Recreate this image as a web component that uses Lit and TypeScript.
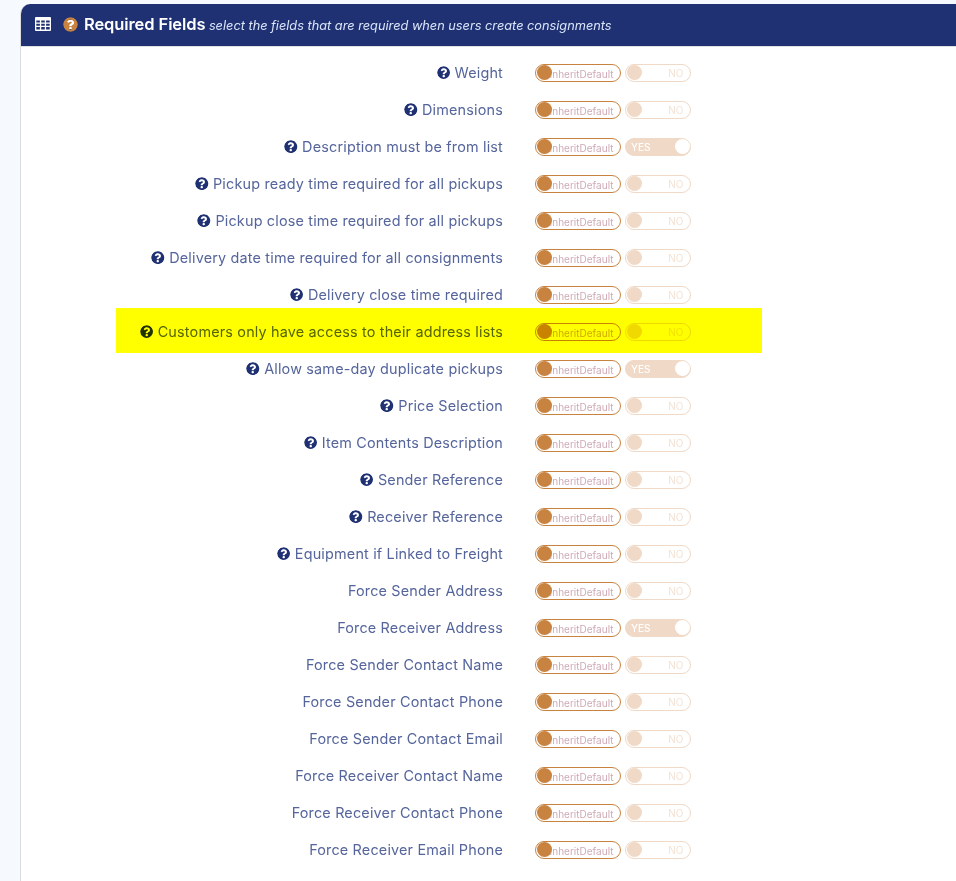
import { LitElement, html, css, svg } from "lit";
import { customElement } from "lit/decorators.js";

const Q = "M504 256c0 136.997-111.043 248-248 248S8 392.997 8 256C8 119.083 119.043 8 256 8s248 111.083 248 248zM262.655 90c-54.497 0-89.255 22.957-116.549 63.758-3.536 5.286-2.353 12.415 2.715 16.258l34.699 26.31c5.205 3.947 12.621 3.008 16.665-2.122 17.864-22.658 30.113-35.797 57.303-35.797 20.429 0 45.698 13.148 45.698 32.958 0 14.976-12.363 22.667-32.534 33.976C247.128 238.528 216 254.941 216 296v4c0 6.627 5.373 12 12 12h56c6.627 0 12-5.373 12-12v-1.333c0-28.462 83.186-29.647 83.186-106.667 0-58.002-60.165-102-116.531-102zM256 338c-25.365 0-46 20.635-46 46 0 25.364 20.635 46 46 46s46-20.636 46-46c0-25.365-20.635-46-46-46z";

const question = (cls: string) => html`<svg class=${cls} viewBox="0 0 512 512"><path fill="currentColor" d=${Q}></path></svg>`;

type Row = { label: string; help: boolean; yes?: boolean; mark?: boolean };
const rows: Row[] = [
  { label: "Weight", help: true },
  { label: "Dimensions", help: true },
  { label: "Description must be from list", help: true, yes: true },
  { label: "Pickup ready time required for all pickups", help: true },
  { label: "Pickup close time required for all pickups", help: true },
  { label: "Delivery date time required for all consignments", help: true },
  { label: "Delivery close time required", help: true },
  { label: "Customers only have access to their address lists", help: true, mark: true },
  { label: "Allow same-day duplicate pickups", help: true, yes: true },
  { label: "Price Selection", help: true },
  { label: "Item Contents Description", help: true },
  { label: "Sender Reference", help: true },
  { label: "Receiver Reference", help: true },
  { label: "Equipment if Linked to Freight", help: true },
  { label: "Force Sender Address", help: false },
  { label: "Force Receiver Address", help: false, yes: true },
  { label: "Force Sender Contact Name", help: false },
  { label: "Force Sender Contact Phone", help: false },
  { label: "Force Sender Contact Email", help: false },
  { label: "Force Receiver Contact Name", help: false },
  { label: "Force Receiver Contact Phone", help: false },
  { label: "Force Receiver Email Phone", help: false },
];

@customElement("app-root")
export class AppRoot extends LitElement {
  static styles = css`
    :host {
      display: block;
      width: 956px;
      height: 881px;
      overflow: hidden;
      background: #f6f9fe;
      font-family: Inter, "Liberation Sans", sans-serif;
      box-sizing: border-box;
      padding: 4px 0 0 20px;
    }
    .card {
      width: 1000px;
      height: 900px;
      background: #fff;
      border-radius: 10px 10px 0 0;
      border-left: 1px solid #dcdde0;
      overflow: hidden;
      box-sizing: border-box;
    }
    .head {
      height: 40px;
      margin-left: -1px;
      background: #1f3172;
      border-bottom: 1px solid #dfe0e2;
      box-sizing: content-box;
      display: flex;
      align-items: center;
      padding: 0 0 2px 15px;
      color: #fff;
    }
    .tbl { width: 16px; height: 14px; margin-right: 12px; flex: none; }
    .hq { width: 15px; height: 15px; color: #c98340; margin-right: 6px; flex: none; background: radial-gradient(circle, #fff 45%, transparent 46%); border-radius: 50%; }
    .title { font-size: 16.5px; font-weight: 600; letter-spacing: -0.1px; }
    .sub { font-size: 12.75px; font-style: italic; margin-left: 3.5px; color: #dbe6fa; padding-top: 2px; }
    .body { padding-top: 7px; }
    .row {
      position: relative;
      height: 37px;
      display: flex;
      align-items: center;
    }
    .row.mark::after {
      content: "";
      position: absolute;
      left: 95px;
      width: 646px;
      top: -5px;
      bottom: -3px;
      background: #ff0;
      mix-blend-mode: multiply;
    }
    .label {
      width: 482px;
      flex: none;
      font-size: 14.4px;
      color: #55659c;
      letter-spacing: 0.18px;
      display: flex;
      justify-content: flex-end;
      align-items: center;
      white-space: nowrap;
    }
    .q { width: 13.5px; height: 13.5px; color: #1f3172; margin-right: 4.5px; flex: none; background: radial-gradient(circle, #fff 45%, transparent 46%); border-radius: 50%; }
    .inherit {
      position: relative;
      margin-left: 32px;
      width: 86px;
      height: 18px;
      box-sizing: border-box;
      border: 1px solid #c98340;
      border-radius: 9px;
      display: flex;
      align-items: center;
      justify-content: flex-end;
      padding: 2px 6.5px 0 0;
      font-size: 10px;
      color: #cfaab4;
      white-space: nowrap;
    }
    .inherit::before {
      content: "";
      position: absolute;
      left: 1px;
      top: 0.5px;
      width: 15px;
      height: 15px;
      border-radius: 50%;
      background: #c98340;
    }
    .sw {
      position: relative;
      margin-left: 4px;
      width: 66px;
      height: 18px;
      box-sizing: border-box;
      border: 1px solid #f0d9c6;
      border-radius: 9px;
      display: flex;
      align-items: center;
      font-size: 10px;
      color: #f3e2d4;
      padding: 1px 6.5px 0 5px;
      justify-content: flex-end;
    }
    .sw::before {
      content: "";
      position: absolute;
      left: 1px;
      top: 0.5px;
      width: 15px;
      height: 15px;
      border-radius: 50%;
      background: #f0d9c6;
    }
    .sw.yes {
      background: #f0d9c6;
      color: #fff;
      justify-content: flex-start;
      font-weight: 500;
    }
    .sw.yes::before { left: auto; right: 0.5px; background: #fff; }
  `;

  render() {
    return html`
      <div class="card">
        <div class="head">
          <svg class="tbl" viewBox="0 0 16 14">
            ${svg`<path fill="#fff" fill-rule="evenodd" d="M1 0h14a1 1 0 0 1 1 1v12a1 1 0 0 1-1 1H1a1 1 0 0 1-1-1V1a1 1 0 0 1 1-1zM1.300 3.500v2h3.600v-2zM6.200 3.500v2h3.600v-2zM11.100 3.500v2h3.600v-2zM1.300 6.700v2h3.600v-2zM6.200 6.700v2h3.600v-2zM11.100 6.700v2h3.600v-2zM1.300 9.900v2.600h3.600V9.900zM6.200 9.900v2.600h3.600V9.900zM11.100 9.900v2.600h3.600V9.900z"></path>`}
          </svg>
          ${question("hq")}
          <span class="title">Required Fields</span>
          <span class="sub">select the fields that are required when users create consignments</span>
        </div>
        <div class="body">
          ${rows.map(
            (r) => html`
              <div class="row ${r.mark ? "mark" : ""}">
                <div class="label">${r.help ? question("q") : ""}<span>${r.label}</span></div>
                <div class="inherit">InheritDefault</div>
                <div class="sw ${r.yes ? "yes" : ""}">${r.yes ? "YES" : "NO"}</div>
              </div>
            `
          )}
        </div>
      </div>
    `;
  }
}
